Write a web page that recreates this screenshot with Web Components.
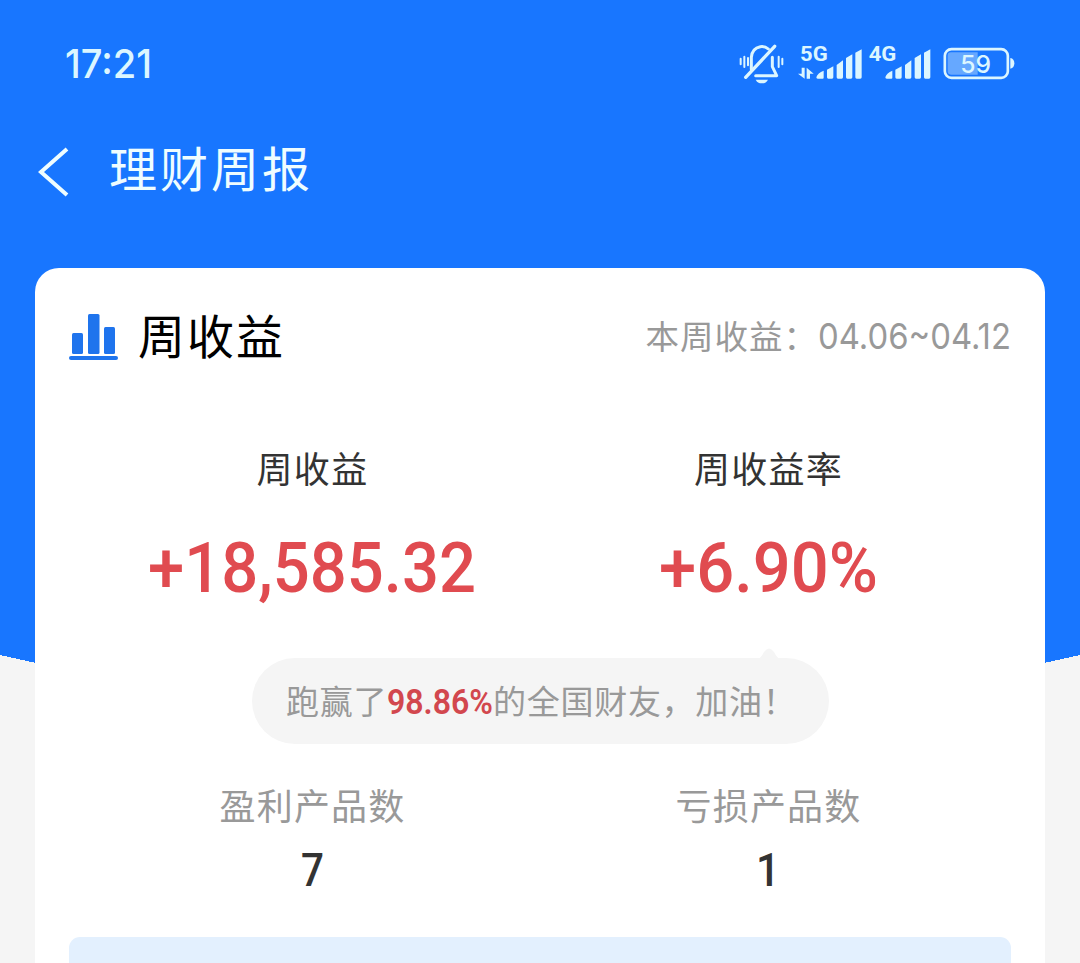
<!DOCTYPE html>
<html lang="zh-CN">
<head>
<meta charset="utf-8">
<meta name="viewport" content="width=device-width, initial-scale=1">
<title>理财周报</title>
<style>
  html, body {
    margin: 0;
    height: 100%;
    overflow: hidden;
    background: #f5f5f5;
    font-family: 'Noto Sans CJK SC', sans-serif;
  }
</style>
</head>
<body>
<weekly-page>
  <status-bar slot="head" time="17:21" battery="59"></status-bar>
  <nav-header slot="head">理财周报</nav-header>
  <report-card>
    <card-heading slot="heading">周收益<span slot="note">本周收益：</span><fit-text slot="note" width="193">04.06~04.12</fit-text></card-heading>
    <amount-item label="周收益"><fit-text width="328">+18,585.32</fit-text></amount-item>
    <amount-item label="周收益率"><fit-text width="219">+6.90%</fit-text></amount-item>
    <tip-bubble slot="tip">跑赢了<fit-text width="106">98.86%</fit-text>的全国财友，加油！</tip-bubble>
    <count-item slot="counts" label="盈利产品数"><fit-text width="23">7</fit-text></count-item>
    <count-item slot="counts" label="亏损产品数"><fit-text width="24">1</fit-text></count-item>
  </report-card>
</weekly-page>

<script>
const define = (name, html, setup) => {
  const template = document.createElement('template');
  template.innerHTML = html;
  customElements.define(name, class extends HTMLElement {
    constructor() {
      super();
      this.attachShadow({ mode: 'open' });
      this.shadowRoot.appendChild(template.content.cloneNode(true));
    }

    connectedCallback() {
      if (setup) setup(this, this.shadowRoot);
    }
  });
};

define('weekly-page', `
  <style>
    :host {
      display: block;
      height: 963px;
      overflow: hidden;
    }
    /* blue backdrop, its lower edge slopes down towards the middle */
    .page {
      display: flex;
      flex-direction: column;
      height: 100%;
      background: conic-gradient(from 102.500deg at 0 655px, #f5f5f5 0 77.500deg, transparent 0) 0 0 / 50% 100% no-repeat,
                  conic-gradient(from 180deg at 100% 655px, #f5f5f5 0 77.500deg, transparent 0) 100% 0 / 50% 100% no-repeat,
                  #1876ff;
    }
  </style>
  <div class="page">
    <slot name="head"></slot>
    <slot></slot>
  </div>
`);

define('status-bar', `
  <style>
    :host {
      display: flex;
      justify-content: space-between;
      align-items: center;
      height: 128px;
      padding: 0 65px;
      color: #dcf6ff;
      font-family: Inter, sans-serif;
    }
    .icons {
      display: flex;
      align-items: center;
      height: 50px;
    }
    svg {
      display: block;
      fill: currentColor;
    }
    .bell { width: 45px; height: 40px; margin-right: 14px; }
    .sim { width: 65px; height: 50px; margin-right: 5px; overflow: visible; }
    .sim.b { width: 63px; margin-right: 12px; }
    .sim text { font: 700 61px Roboto, sans-serif; }
    .battery { width: 72px; height: 40px; }
    .time {
      font-size: 40px;
      font-weight: 500;
      line-height: 48px;
    }
  </style>
  <fit-text class="time" width="87"></fit-text>
  <div class="icons">
    <svg class="bell" viewBox="28 42 135 120">
      <g fill="none" stroke="currentColor" stroke-width="9" stroke-linecap="round" stroke-linejoin="round">
        <path d="M65 118V82Q67 55 92 50Q106 48 116 57M128 82V110L141 137H78"/>
        <path d="M135 49L48 142" stroke-width="10"/>
        <path d="M33 86V103M44 80V111M55 84V106M147 80V111M158 86V103" stroke-width="6"/>
      </g>
      <path d="M78 149H115Q110 160 97 160Q83 160 78 149Z"/>
    </svg>
    <svg class="sim" viewBox="205 27 195 150">
      <text x="211" y="93" textLength="83" lengthAdjust="spacingAndGlyphs">5G</text>
      <path d="M216 113H225V146L205 131H216ZM231 113L252 131H241V146H231Z"/>
      <path d="M260 142Q264 128 282 122V143Q282 146 279 146H264Q260 146 260 142ZM292 119L311 109V142Q311 146 307 146H296Q292 146 292 142ZM321 105L340 91V142Q340 146 336 146H325Q321 146 321 142ZM349 84L368 73V142Q368 146 364 146H353Q349 146 349 142ZM377 68L396 58V142Q396 146 392 146H381Q377 146 377 142Z"/>
    </svg>
    <svg class="sim b" viewBox="413 27 189 150">
      <text x="415" y="93" textLength="83" lengthAdjust="spacingAndGlyphs">4G</text>
      <path d="M465 142Q469 128 486 122V143Q486 146 483 146H469Q465 146 465 142ZM495 119L514 109V142Q514 146 510 146H499Q495 146 495 142ZM524 105L543 91V142Q543 146 539 146H528Q524 146 524 142ZM553 84L572 73V142Q572 146 568 146H557Q553 146 553 142ZM581 68L600 58V142Q600 146 596 146H585Q581 146 581 142Z"/>
    </svg>
    <svg class="battery" viewBox="640 42 216 120">
      <path d="M664 67H744V134H664Q654 134 654 124V77Q654 67 664 67Z" opacity=".4"/>
      <rect x="645.500" y="57.500" width="189" height="86" rx="20" fill="none" stroke="currentColor" stroke-width="8"/>
      <path d="M842 84Q854 86 854 100Q854 114 842 116Z"/>
      <text class="level" x="738" y="128" font-size="74" font-weight="500" text-anchor="middle"></text>
    </svg>
  </div>
`, (el, root) => {
  root.querySelector('.time').textContent = el.getAttribute('time');
  root.querySelector('.level').textContent = el.getAttribute('battery');
});

define('nav-header', `
  <style>
    :host {
      display: flex;
      align-items: center;
      height: 84px;
      margin-bottom: 56px;
      padding-left: 38px;
      color: #effdff;
      font-size: 48px;
      line-height: 84px;
      letter-spacing: 3px;
    }
    svg { width: 32px; height: 50px; margin: 4px 39px 0 0; }
    span { margin-top: -8px; }
  </style>
  <svg viewBox="0 0 32 50" fill="none" stroke="currentColor" stroke-width="4"><path d="M29 2L3 25L29 48"/></svg>
  <span><slot></slot></span>
`);

define('report-card', `
  <style>
    :host {
      display: flex;
      flex-direction: column;
      flex: 1;
      margin: 0 35px;
      border-radius: 24px 24px 0 0;
      background: #fff;
    }
    .row { display: flex; padding: 0 49px; }
    .banner {
      flex: 1;
      margin: 0 34px;
      border-radius: 11px 11px 0 0;
      background: #e3f0fe;
    }
  </style>
  <slot name="heading"></slot>
  <div class="row"><slot></slot></div>
  <slot name="tip"></slot>
  <div class="row"><slot name="counts"></slot></div>
  <div class="banner"></div>
`);

define('card-heading', `
  <style>
    :host {
      display: flex;
      align-items: center;
      height: 138px;
      padding: 0 34px;
      color: #000;
      font-size: 47px;
      letter-spacing: 2px;
    }
    svg { width: 49px; height: 47px; margin-right: 20px; }
    .title { margin-top: -7px; }
    .note {
      display: flex;
      align-items: center;
      margin: -2px 0 0 auto;
      color: #999;
      font-size: 33.500px;
      letter-spacing: 1px;
    }
    ::slotted(span) { margin-top: -4px; }
    ::slotted(fit-text) {
      font-family: Inter, sans-serif;
      font-size: 36px;
      letter-spacing: 0;
    }
  </style>
  <svg viewBox="0 0 49 47" fill="#1f74ed">
    <rect x="3" y="19" width="11" height="21" rx="1.500"/>
    <rect x="19" y="0" width="11.500" height="40" rx="1.500"/>
    <rect x="35" y="13" width="11" height="27" rx="1.500"/>
    <rect x="0" y="42" width="49" height="4" rx="2"/>
  </svg>
  <span class="title"><slot></slot></span>
  <div class="note"><slot name="note"></slot></div>
`);

define('amount-item', `
  <style>
    :host {
      display: flex;
      flex: 1;
      flex-direction: column;
      align-items: center;
      height: 252px;
    }
    .label {
      height: 54px;
      margin-top: 34px;
      padding-left: 1px;
      color: #333;
      font-size: 36px;
      line-height: 54px;
      letter-spacing: 1.300px;
    }
    .amount {
      margin-top: 32px;
      color: #e04b50;
      font: 500 70px/84px Roboto, sans-serif;
    }
  </style>
  <span class="label"></span>
  <div class="amount"><slot></slot></div>
`, (el, root) => {
  root.querySelector('.label').textContent = el.getAttribute('label');
});

define('tip-bubble', `
  <style>
    :host {
      position: relative;
      display: flex;
      align-items: center;
      align-self: flex-start;
      box-sizing: border-box;
      width: 577px;
      height: 86px;
      margin-left: 217px;
      padding: 0 0 2px 34px;
      border-radius: 43px;
      background: #f5f5f5;
      color: #999;
      font-size: 33px;
      letter-spacing: .7px;
      white-space: nowrap;
    }
    /* pointer towards the rate above */
    svg {
      position: absolute;
      top: -10px;
      left: 505px;
      width: 24px;
      height: 12px;
    }
    ::slotted(fit-text) {
      margin-top: 5px;
      color: #d2474e;
      font: 600 35px/40px Roboto, sans-serif;
      letter-spacing: 0;
    }
  </style>
  <svg viewBox="0 0 24 12" fill="#f5f5f5"><path d="M0 12Q4 10 7 4Q12-3 17 4Q20 10 24 12Z"/></svg>
  <slot></slot>
`);

define('count-item', `
  <style>
    :host {
      display: flex;
      flex: 1;
      flex-direction: column;
      align-items: center;
      height: 193px;
    }
    .label {
      margin-top: 33px;
      padding-left: 1px;
      color: #999;
      font-size: 36px;
      line-height: 54px;
      letter-spacing: 1.200px;
    }
    .count {
      margin-top: 12px;
      color: #333;
      font: 500 46px/54px Roboto, sans-serif;
    }
  </style>
  <span class="label"></span>
  <div class="count"><slot></slot></div>
`, (el, root) => {
  root.querySelector('.label').textContent = el.getAttribute('label');
});

// squeezes its text into the given width
define('fit-text', `
  <style>
    :host { display: inline-block; white-space: nowrap; }
    span { display: inline-block; transform-origin: 0 50%; }
  </style>
  <span><slot></slot></span>
`, (el, root) => {
  const width = Number(el.getAttribute('width'));
  const text = root.querySelector('span');
  el.style.width = width + 'px';
  text.style.transform = 'scaleX(' + width / text.getBoundingClientRect().width + ')';
});
</script>
</body>
</html>
